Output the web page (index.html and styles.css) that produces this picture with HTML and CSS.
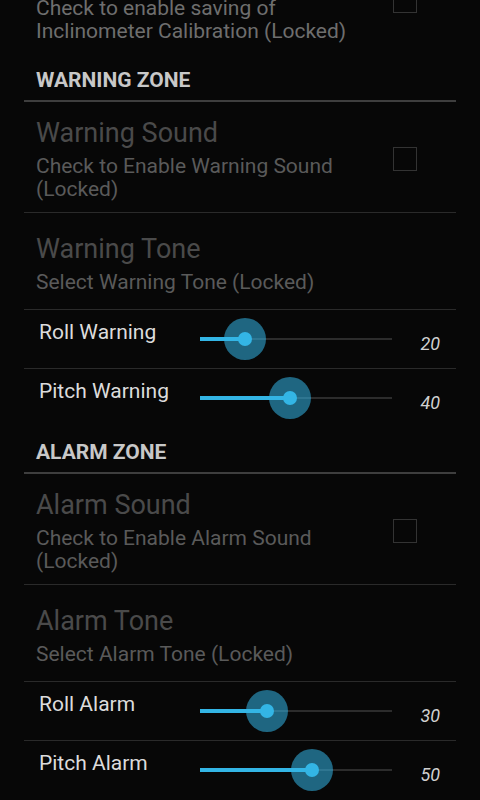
FILE: index.html
```html
<!DOCTYPE html>
<html lang="en">

<head>
  <meta charset="UTF-8">
  <meta name="viewport" content="width=device-width, initial-scale=1.0">
  <link rel="stylesheet" href="styles.css">
</head>

<body>
  <div id="prefs">
    <div class="pref pref-cut">
      <div class="pref-text">
        <div class="pref-title"></div>
        <div class="pref-summary summary-on">Check to enable saving of Inclinometer Calibration (Locked)</div>
      </div>
      <span class="checkbox"></span>
    </div>

    <div class="category">WARNING ZONE</div>
    <div class="pref">
      <div class="pref-text">
        <div class="pref-title">Warning Sound</div>
        <div class="pref-summary">Check to Enable Warning Sound (Locked)</div>
      </div>
      <span class="checkbox"></span>
    </div>
    <div class="pref">
      <div class="pref-text">
        <div class="pref-title">Warning Tone</div>
        <div class="pref-summary">Select Warning Tone (Locked)</div>
      </div>
    </div>
    <div class="seek">
      <div class="seek-label">Roll Warning</div>
      <div class="slider">
        <div class="track"></div>
        <div class="fill" style="width:45px"></div>
        <div class="thumb" style="left:45px"></div>
      </div>
      <div class="seek-value">20</div>
    </div>
    <div class="seek seek-end">
      <div class="seek-label">Pitch Warning</div>
      <div class="slider">
        <div class="track"></div>
        <div class="fill" style="width:90px"></div>
        <div class="thumb" style="left:90px"></div>
      </div>
      <div class="seek-value">40</div>
    </div>

    <div class="category">ALARM ZONE</div>
    <div class="pref">
      <div class="pref-text">
        <div class="pref-title">Alarm Sound</div>
        <div class="pref-summary">Check to Enable Alarm Sound (Locked)</div>
      </div>
      <span class="checkbox"></span>
    </div>
    <div class="pref">
      <div class="pref-text">
        <div class="pref-title">Alarm Tone</div>
        <div class="pref-summary">Select Alarm Tone (Locked)</div>
      </div>
    </div>
    <div class="seek">
      <div class="seek-label">Roll Alarm</div>
      <div class="slider">
        <div class="track"></div>
        <div class="fill" style="width:67px"></div>
        <div class="thumb" style="left:67px"></div>
      </div>
      <div class="seek-value">30</div>
    </div>
    <div class="seek seek-end">
      <div class="seek-label">Pitch Alarm</div>
      <div class="slider">
        <div class="track"></div>
        <div class="fill" style="width:112px"></div>
        <div class="thumb" style="left:112px"></div>
      </div>
      <div class="seek-value">50</div>
    </div>
  </div>
</body>

</html>
```

FILE: styles.css
```css
html,
body {
  margin: 0;
  padding: 0;
  height: 100%;
  overflow: hidden;
  background: #070707;
}

body {
  font-family: Roboto, 'Noto Sans', 'Liberation Sans', sans-serif;
}

#prefs {
  padding: 0 24px;
  margin-top: -56px;
}

.pref {
  display: flex;
  align-items: center;
  box-sizing: border-box;
  min-height: 97px;
  padding: 15px 39px 11px 12px;
  border-bottom: 1px solid #2a2a2a;
}

.pref-cut {
  padding-bottom: 13px;
  border-bottom: 0;
}

.pref-text {
  flex: 1;
}

.pref-title {
  height: 32px;
  margin-bottom: 6px;
  font-size: 27px;
  line-height: 32px;
  color: #4a4a4a;
}

.pref-summary {
  font-size: 21px;
  line-height: 23px;
  color: #5a5a5a;
}

.summary-on {
  color: #6e6e6e;
}

.checkbox {
  flex: none;
  width: 22px;
  height: 22px;
  margin-left: 17px;
  border: 1px solid #333;
}

.category {
  padding: 12px 0 8px 12px;
  font-size: 21px;
  font-weight: bold;
  line-height: 24px;
  color: #c8c8c8;
  border-bottom: 2px solid #3e3e3e;
}

.seek {
  display: flex;
  align-items: center;
  box-sizing: border-box;
  height: 59px;
  padding: 0 16px 0 15px;
  border-bottom: 1px solid #2a2a2a;
}

.seek-end {
  border-bottom-color: transparent;
}

.seek-label {
  flex: 0 0 161px;
  align-self: flex-start;
  margin-top: 10px;
  font-size: 21px;
  line-height: 24px;
  color: #dcdcdc;
}

.slider {
  position: relative;
  flex: 0 0 192px;
  height: 42px;
}

.track {
  position: absolute;
  top: 20px;
  left: 0;
  right: 0;
  height: 2px;
  background: #2c2c2c;
}

.fill {
  position: absolute;
  top: 19px;
  left: 0;
  height: 4px;
  background: #33b5e5;
}

.thumb {
  position: absolute;
  top: 0;
  width: 42px;
  height: 42px;
  margin-left: -21px;
  border-radius: 50%;
  background: rgba(51, 181, 229, .55);
}

.thumb::after {
  content: '';
  position: absolute;
  top: 14px;
  left: 14px;
  width: 14px;
  height: 14px;
  border-radius: 50%;
  background: #33b5e5;
}

.seek-value {
  flex: 1;
  margin-top: 8px;
  text-align: right;
  font-size: 18px;
  font-style: italic;
  color: #d0d0d0;
}
```
